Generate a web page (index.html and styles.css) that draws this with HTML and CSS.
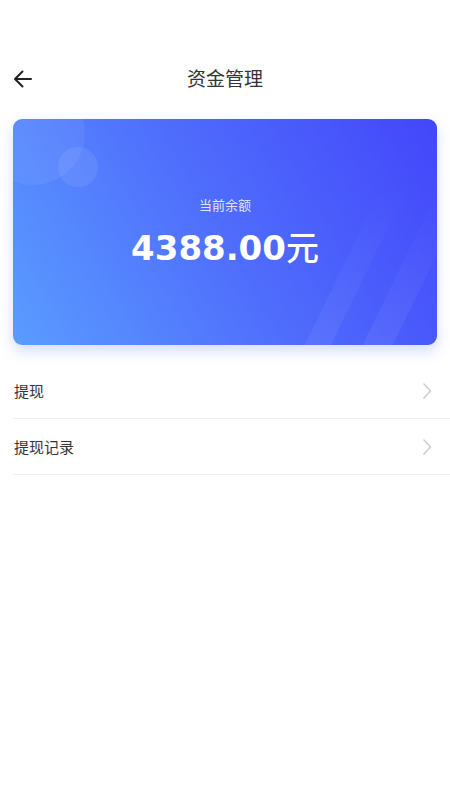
FILE: index.html
```html
<!DOCTYPE html>
<html>
  <head>
    <meta charset="UTF-8">
    <title>资金管理</title>
    <link rel="stylesheet" href="styles.css">
  </head>
  <body>
    <div class="header">
      <a class="back" href="#">
        <svg width="22" height="22" viewBox="0 0 22 22">
          <path d="M19 11H3.5M10.5 3.5L3 11l7.5 7.5" fill="none" stroke="#222" stroke-width="2" stroke-linecap="round" stroke-linejoin="round"/>
        </svg>
      </a>
      <h1>资金管理</h1>
    </div>

    <div class="card">
      <span class="circle big"></span>
      <span class="circle small"></span>
      <span class="stripe one"></span>
      <span class="stripe two"></span>
      <div class="label">当前余额</div>
      <div class="amount">4388.00<span class="unit">元</span></div>
    </div>

    <ul class="menu">
      <li>
        <span>提现</span>
        <svg width="10" height="18" viewBox="0 0 10 18"><path d="M1.5 1.5L8.5 9l-7 7.5" fill="none" stroke="#c8c8c8" stroke-width="1.3"/></svg>
      </li>
      <li>
        <span>提现记录</span>
        <svg width="10" height="18" viewBox="0 0 10 18"><path d="M1.5 1.5L8.5 9l-7 7.5" fill="none" stroke="#c8c8c8" stroke-width="1.3"/></svg>
      </li>
    </ul>
  </body>
</html>
```

FILE: styles.css
```css
body {
    margin: 0;
    background: #fff;
    font-family: "Noto Sans CJK SC", "Noto Sans", sans-serif;
    color: #333;
}
.header {
    position: relative;
    height: 48px;
    margin-top: 53px;
    display: flex;
    align-items: center;
    justify-content: center;
}
.header h1 {
    margin: 0;
    font-size: 19px;
    font-weight: normal;
    color: #333;
}
.back {
    position: absolute;
    left: 12px;
    top: 15px;
    display: flex;
}
.card {
    position: relative;
    overflow: hidden;
    margin: 18px 13px 0;
    height: 226px;
    border-radius: 9px;
    background: linear-gradient(60deg, #5a9cff 0%, #4f6dfc 50%, #4346fa 100%);
    box-shadow: 0 6px 14px rgba(80, 120, 250, 0.25);
    display: flex;
    flex-direction: column;
    align-items: center;
    color: #fff;
}
.circle {
    position: absolute;
    border-radius: 50%;
    background: rgba(255, 255, 255, 0.06);
}
.circle.big {
    left: -32px;
    top: -38px;
    width: 104px;
    height: 104px;
}
.circle.small {
    left: 45px;
    top: 28px;
    width: 40px;
    height: 40px;
    background: rgba(255, 255, 255, 0.08);
}
.stripe {
    position: absolute;
    bottom: -20px;
    width: 26px;
    height: 180px;
    background: linear-gradient(to top, rgba(255, 255, 255, 0.07), rgba(255, 255, 255, 0));
    transform: skewX(-26deg);
    transform-origin: bottom left;
}
.stripe.one {
    left: 282px;
}
.stripe.two {
    left: 340px;
    width: 30px;
}
.label {
    margin-top: 76px;
    font-size: 13px;
    color: rgba(255, 255, 255, 0.85);
}
.amount {
    margin-top: 8px;
    font-family: "DejaVu Sans", "Noto Sans CJK SC", sans-serif;
    font-size: 34px;
    font-weight: bold;
}
.unit {
    font-family: "Noto Sans CJK SC", sans-serif;
    font-size: 33px;
    font-weight: 500;
}
.menu {
    list-style: none;
    margin: 18px 0 0 13px;
    padding: 0;
}
.menu li {
    height: 55px;
    border-bottom: 1px solid #eee;
    display: flex;
    align-items: center;
    justify-content: space-between;
    padding: 0 18px 0 1px;
    font-size: 15px;
    color: #333;
}
```
